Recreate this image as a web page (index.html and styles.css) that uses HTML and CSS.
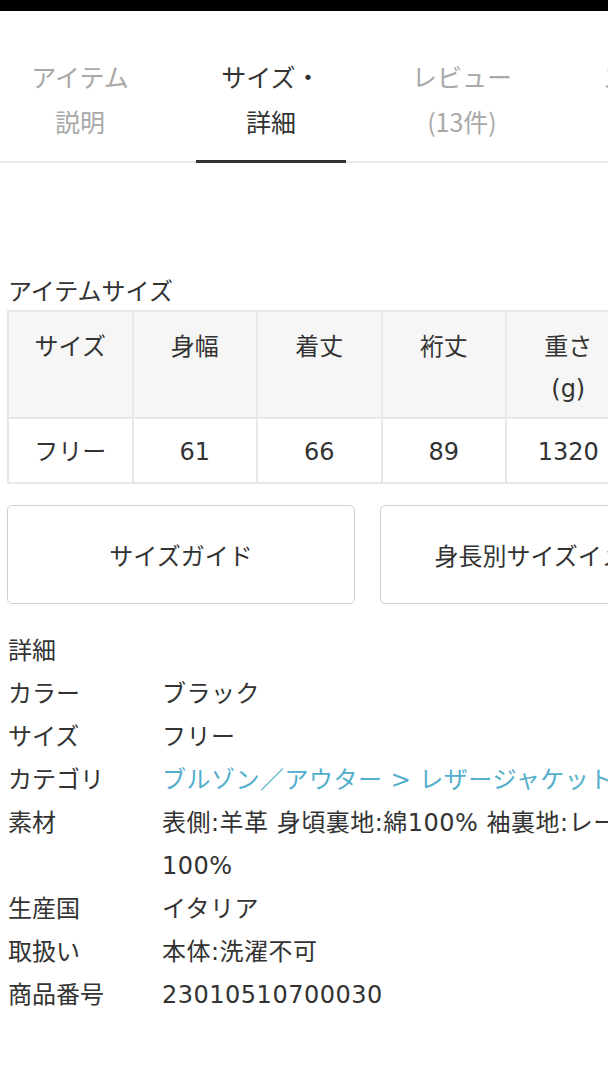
FILE: index.html
```html
<!DOCTYPE html>
<html lang="ja">
<head>
<meta charset="utf-8">
<title>サイズ・詳細</title>
<link rel="stylesheet" href="styles.css">
</head>
<body>
<div class="topbar"></div>
<nav class="tabs">
  <div class="tab">アイテム<br>説明</div>
  <div class="tab active">サイズ・<br>詳細</div>
  <div class="tab">レビュー<br>(13件)</div>
  <div class="tab">スタッフ<br>レビュー</div>
</nav>
<main class="page">
  <h2 class="section-title">アイテムサイズ</h2>
  <table class="size-table">
    <thead>
      <tr><th>サイズ</th><th>身幅</th><th>着丈</th><th>裄丈</th><th>重さ<br>(g)</th></tr>
    </thead>
    <tbody>
      <tr><td>フリー</td><td>61</td><td>66</td><td>89</td><td>1320</td></tr>
    </tbody>
  </table>
  <div class="buttons">
    <div class="btn">サイズガイド</div>
    <div class="btn">身長別サイズイメージ</div>
  </div>
  <h2 class="detail-title">詳細</h2>
  <dl class="details">
    <div class="row"><dt>カラー</dt><dd>ブラック</dd></div>
    <div class="row"><dt>サイズ</dt><dd>フリー</dd></div>
    <div class="row"><dt>カテゴリ</dt><dd class="link">ブルゾン／アウター &gt; レザージャケット</dd></div>
    <div class="row"><dt>素材</dt><dd class="wrap">表側:羊革 身頃裏地:綿100% 袖裏地:レーヨン100%</dd></div>
    <div class="row"><dt>生産国</dt><dd>イタリア</dd></div>
    <div class="row"><dt>取扱い</dt><dd>本体:洗濯不可</dd></div>
    <div class="row"><dt>商品番号</dt><dd>23010510700030</dd></div>
  </dl>
</main>
</body>
</html>
```

FILE: styles.css
```css
html, body {
  margin: 0;
  padding: 0;
  background: #fff;
  overflow: hidden;
}
body {
  width: 608px;
  font-family: "Noto Sans CJK JP", "Noto Sans", sans-serif;
  color: #333;
}
.topbar {
  height: 11px;
  background: #000;
}
.tabs {
  display: flex;
  gap: 31px;
  width: 800px;
  padding-top: 43px;
  border-bottom: 2px solid #e8e8e8;
}
.tab {
  flex: 0 0 160px;
  text-align: center;
  font-size: 25px;
  line-height: 45px;
  color: #a8a8a8;
  padding-bottom: 17px;
  position: relative;
  white-space: nowrap;
}
.tab.active {
  color: #333;
}
.tab.active::after {
  content: "";
  position: absolute;
  left: 5px;
  right: 5px;
  bottom: -2px;
  height: 3px;
  background: #333;
}
.page {
  width: 722px;
  padding: 0 0 0 7px;
}
.section-title {
  margin: 109px 0 0 1px;
  font-size: 24px;
  font-weight: 400;
  line-height: 36px;
}
.size-table {
  margin-top: 2px;
  border-collapse: collapse;
  table-layout: fixed;
  width: 613px;
  font-size: 24px;
  font-family: "DejaVu Sans", "Noto Sans CJK JP", sans-serif;
}
.size-table th,
.size-table td {
  width: 122.5px;
  border: 2px solid #e8e8e8;
  text-align: center;
  font-weight: 400;
}
.size-table th {
  background: #f6f6f6;
  vertical-align: top;
  line-height: 42px;
  padding: 14px 0 7px;
  height: 84px;
}
.size-table td {
  height: 60px;
  padding: 3px 0 0;
  line-height: 60px;
}
.buttons {
  display: flex;
  gap: 25px;
  margin-top: 21px;
}
.btn {
  flex: 0 0 346px;
  height: 97px;
  border: 1.5px solid #cfcfcf;
  border-radius: 5px;
  display: flex;
  align-items: center;
  justify-content: center;
  font-size: 24px;
  white-space: nowrap;
}
.detail-title {
  margin: 24px 0 0 1px;
  font-size: 24px;
  font-weight: 400;
  line-height: 41px;
}
.details {
  margin: 0;
  padding-top: 4px;
  font-size: 24px;
  line-height: 43px;
  font-family: "DejaVu Sans", "Noto Sans CJK JP", sans-serif;
}
.row {
  display: flex;
}
.row dt {
  flex: 0 0 154px;
  margin: 0 0 0 1px;
}
.row dd {
  margin: 0;
  white-space: nowrap;
  letter-spacing: 0.5px;
}
.row dd.wrap {
  white-space: normal;
  width: 530px;
}
.row dd.link {
  color: #52aecb;
}
```
